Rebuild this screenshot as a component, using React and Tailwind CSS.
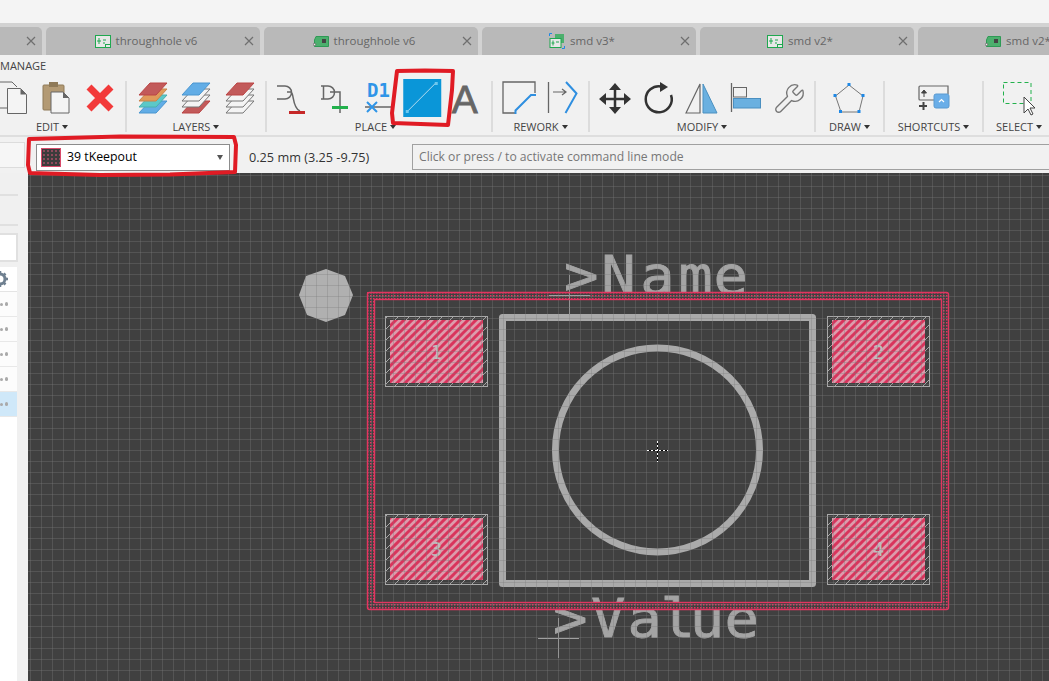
import { Wrench } from 'lucide-react'

const sans = 'font-["Open_Sans",sans-serif]'

function SchematicIcon() {
  return (
    <svg width="16" height="13" viewBox="0 0 16 13" className="shrink-0">
      <rect x="0.5" y="0.5" width="15" height="12" fill="#e8e8e8" stroke="#1fa84f" />
      <path d="M4 3v6M2 6h4M8 5h3M8 8h2" stroke="#1fa84f" fill="none" />
      <rect x="10.5" y="9.5" width="5" height="3" fill="#e8e8e8" stroke="#1fa84f" />
    </svg>
  )
}

function BoardIcon() {
  return (
    <svg width="16" height="11" viewBox="0 0 16 11" className="shrink-0">
      <path d="M3 0.5h12.5v10H1.5V4z" fill="#4caf6d" stroke="#2e9a55" />
      <rect x="9" y="3" width="4" height="4" fill="#444" />
      <circle cx="1.5" cy="8.5" r="1.2" fill="#eee" stroke="#555" strokeWidth="0.7" />
    </svg>
  )
}

function ComboIcon() {
  return (
    <svg width="16" height="16" viewBox="0 0 16 16" className="shrink-0">
      <path d="M6 1h9v9H6z" fill="#4caf6d" />
      <rect x="1" y="5.5" width="11" height="9" fill="#e8e8e8" stroke="#1fa84f" />
      <path d="M4 7.5v5M2.5 10h3M7 9h3" stroke="#1fa84f" fill="none" />
      <path d="M0.5 3V0.5H3M13 15.5h2.5V13" stroke="#1e88e5" fill="none" />
    </svg>
  )
}

function Tab({ icon, label }) {
  return (
    <div className="w-[214px] shrink-0 h-[28px] bg-[#b9b9b9] rounded-t-[5px] flex items-center">
      <div className="flex-1 flex items-center justify-center gap-[5px] whitespace-nowrap pl-[2px]">
        {icon}
        {label && <span className={`text-[11.5px] text-[#666] ${sans}`}>{label}</span>}
      </div>
      <svg width="10" height="10" viewBox="0 0 10 10" className="mr-[6px] shrink-0">
        <path d="M1 1l8 8M9 1l-8 8" stroke="#6f6f6f" strokeWidth="1.2" />
      </svg>
    </div>
  )
}

function Box({ children }) {
  return (
    <svg width="43.5" height="38" viewBox="0 0 43.5 38" className="shrink-0 overflow-visible">
      {children}
    </svg>
  )
}

function Group({ width, label, caret = true, labelClass = '', children }) {
  return (
    <div className={`${width} shrink-0 h-[51px] mt-[2px] flex flex-col items-center border-r-2 border-[#dcdcdc]`}>
      <div className="flex h-[38px] -mt-[2px] items-center">{children}</div>
      <div className={`mt-[3px] flex items-center gap-[3px] text-[11px] leading-[13px] text-[#444] whitespace-nowrap ${sans} ${labelClass}`}>
        {label}
        {caret && <span className="w-0 h-0 border-x-[3.5px] border-x-transparent border-t-[4px] border-t-[#333]" />}
      </div>
    </div>
  )
}

function Doc({ x, y, w = 18, h = 21, fill = '#f4f4f4' }) {
  return (
    <g>
      <path d={`M${x} ${y}h${w - 6}l6 6v${h - 6}h${-w}z`} fill={fill} stroke="#666" />
      <path d={`M${x + w - 6} ${y}l6 6h-6z`} fill="#666" />
    </g>
  )
}

function Layers({ items }) {
  return (
    <Box>
      {[...items].reverse().map((c, i) => {
        const y = 4 + (items.length - 1 - i) * 6
        return <path key={i} d={`M19 ${y}h17l-11 12H8z`} fill={c.fill} stroke={c.stroke} strokeWidth="1" />
      })}
    </Box>
  )
}

const white = { fill: '#f4f4f4', stroke: '#777' }
const redLayer = { fill: '#c25a5a', stroke: '#b44' }
const blueLayer = { fill: '#62ade6', stroke: '#4a96d0' }

function Toolbar() {
  return (
    <div className="h-[82px] bg-[#f1f1f1] border-b-2 border-[#dedede] shrink-0">
      <div className={`h-[24px] pt-[4px] text-[11px] leading-[14px] text-[#444] ${sans}`}>MANAGE</div>
      <div className="flex -ml-[13px]">
        <Group width="w-[140px]" label="EDIT" labelClass="pr-[8px]">
          <Box>
            <path d="M0 3H21l5 5" fill="none" stroke="#666" />
            <path d="M0 29H16" fill="none" stroke="#666" />
            <Doc x={16.5} y={9.5} w={19} h={25} />
          </Box>
          <Box>
            <rect x="9" y="6" width="21" height="25" rx="1" fill="#b39a74" stroke="#8f7a58" />
            <rect x="15" y="3" width="9" height="5" fill="#8f7a58" />
            <Doc x={17} y={13} />
          </Box>
          <Box>
            <path d="M11 8l22 22M33 8L11 30" stroke="#f23a3a" strokeWidth="7" />
          </Box>
        </Group>
        <Group width="w-[140px]" label="LAYERS">
          <Layers items={[redLayer, { fill: '#e09a5a', stroke: '#c8844a' }, { fill: '#5cc8c8', stroke: '#48b0b0' }, blueLayer]} />
          <Layers items={[blueLayer, white, white, redLayer]} />
          <Layers items={[redLayer, white, white, white]} />
        </Group>
        <Group width="w-[226px]" label="PLACE" labelClass="pr-[7px] text-[11.5px]">
          <Box>
            <path d="M7 7h8a6.500 6.500 0 0 1 0 13H7M17 13h4c3 0 1 16 9 19" fill="none" stroke="#666" strokeWidth="1.5" />
            <rect x="19" y="32" width="16" height="3" fill="#c62828" />
          </Box>
          <Box>
            <path d="M7 7h7a6.500 6.500 0 0 1 0 13H7M9.500 7v13M16 13h10v21" fill="none" stroke="#666" strokeWidth="1.5" />
            <rect x="18" y="27" width="16" height="3" fill="#22b14c" />
          </Box>
          <Box>
            <text x="10" y="18" fontSize="19" fontWeight="700" fill="#2f95e8" fontFamily="DejaVu Sans Mono, monospace">D1</text>
            <path d="M8 28h28" stroke="#666" strokeWidth="1.5" />
            <path d="M10 23l10 10M20 23L10 33" stroke="#2f95e8" strokeWidth="2" />
          </Box>
          <Box>
            <rect x="2.250" y="0" width="38" height="38" fill="#0a96d8" />
            <path d="M6.750 32L34.750 4" stroke="#b5dcef" strokeWidth="1" />
            <rect x="4.750" y="31" width="3" height="3" fill="#6cc8ee" />
            <rect x="33.750" y="3" width="3" height="3" fill="#6cc8ee" />
          </Box>
          <Box>
            <text x="20.750" y="34" textAnchor="middle" fontSize="39" fill="#666" stroke="#666" strokeWidth="0.8" fontFamily="Liberation Sans, sans-serif">A</text>
          </Box>
        </Group>
        <Group width="w-[97px]" label="REWORK">
          <Box>
            <path d="M18.500 34H6V3h32v11" fill="none" stroke="#666" strokeWidth="1.3" />
            <path d="M18.500 35v-3.500L34 16h5" fill="none" stroke="#2f8fe0" strokeWidth="2" />
          </Box>
          <Box>
            <path d="M7.500 3v31" stroke="#666" strokeWidth="1.3" />
            <path d="M12 13h12M21 10l4 3-4 3" fill="none" stroke="#666" strokeWidth="1.2" />
            <path d="M25 3l10.500 11.500L24.500 34" fill="none" stroke="#2f8fe0" strokeWidth="2" />
          </Box>
        </Group>
        <Group width="w-[226px]" label="MODIFY">
          <Box>
            <path d="M22 8v24M10 20h24" stroke="#333" strokeWidth="2.500" />
            <path d="M22 4l6 7H16zM22 35l6-7H16zM6 20l7-6v12zM38 20l-7-6v12z" fill="#333" />
          </Box>
          <Box>
            <path d="M24 7.500A13 13 0 1 0 34 16" fill="none" stroke="#333" strokeWidth="2.500" />
            <path d="M23 3l8 5-8 5z" fill="#333" />
          </Box>
          <Box>
            <path d="M6 34L20 5v29z" fill="none" stroke="#666" strokeWidth="1.200" />
            <path d="M23 5l14 29H23z" fill="#6ab0e0" stroke="#4a90c0" />
          </Box>
          <Box>
            <path d="M7.500 4v29" stroke="#666" strokeWidth="1.300" />
            <rect x="9.500" y="8.500" width="13" height="9.500" fill="none" stroke="#666" />
            <rect x="9.500" y="19.500" width="27" height="9.500" fill="#6ab0e0" stroke="#4a8fc0" />
          </Box>
          <div className="w-[43.5px] flex justify-center text-[#777]">
            <Wrench size={33} strokeWidth={1} />
          </div>
        </Group>
        <Group width="w-[69px]" label="DRAW">
          <Box>
            <path d="M21 6l14 11-4 16H13L7.500 17z" fill="none" stroke="#777" strokeWidth="1" />
            <g fill="#1e88e5">
              <rect x="19.500" y="4" width="3" height="3" />
              <rect x="33.500" y="15" width="3" height="3" />
              <rect x="29.500" y="31" width="3" height="3" />
              <rect x="11" y="31" width="3" height="3" />
              <rect x="5.500" y="15" width="3" height="3" />
            </g>
          </Box>
        </Group>
        <Group width="w-[99px]" label="SHORTCUTS">
          <Box>
            <path d="M36 15V7H8q-1 0-1 1v12q0 1 1 1h18" fill="none" stroke="#666" strokeWidth="1.200" />
            <path d="M12 18v-5M9.500 14l2.500-3 2.500 3z" fill="#444" stroke="#444" />
            <path d="M7 27h8M11.500 23v8" stroke="#444" strokeWidth="2" />
            <rect x="22" y="15" width="15" height="14" rx="2" fill="#6aaee8" stroke="#5a9ad0" />
            <path d="M27 23l2.500-2.500L32 23" fill="none" stroke="#fff" strokeWidth="1.200" />
          </Box>
        </Group>
        <div className="w-[70px] shrink-0 h-[51px] mt-[2px] flex flex-col items-center">
          <div className="flex h-[38px] -mt-[2px] items-center">
            <Box>
              <rect x="6.500" y="3.500" width="27.500" height="21" fill="none" stroke="#22b14c" strokeDasharray="4 3" />
              <path d="M27 18v16l4-4 3 6 2-1-3-6h5z" fill="#fff" stroke="#444" />
            </Box>
          </div>
          <div className={`mt-[3px] flex items-center gap-[3px] text-[11px] leading-[13px] text-[#444] whitespace-nowrap ${sans}`}>
            SELECT
            <span className="w-0 h-0 border-x-[3.5px] border-x-transparent border-t-[4px] border-t-[#333]" />
          </div>
        </div>
      </div>
    </div>
  )
}

function CommandRow() {
  return (
    <div className={`h-[36px] shrink-0 bg-[#f1f1f1] flex items-center pt-[5px] text-[12px] ${sans}`}>
      <div className="w-[25px] h-[26px] -mt-[6px] bg-[#f6f6f6] border border-l-0 border-[#dcdcdc] shrink-0" />
      <div className="ml-[11px] w-[194px] h-[27px] shrink-0 -mt-[1px] bg-white border border-[#8c8c8c] flex items-center pl-[4px]">
        <div className="w-[20px] h-[19px] border border-[#d84a6a] bg-[#3c3c3c] bg-[radial-gradient(#8f4a5c_1px,transparent_1px)] bg-[length:4px_4px]" />
        <span className="ml-[6px] text-black flex-1 text-[12.3px]">39 tKeepout</span>
        <span className="mr-[6px] w-0 h-0 border-x-[3.5px] border-x-transparent border-t-[5px] border-t-[#555]" />
      </div>
      <span className="ml-[19px] w-[163px] shrink-0 text-[#333] text-[12.7px]">0.25 mm (3.25 -9.75)</span>
      <div className="flex-1 h-[26px] -mt-[1px] border border-r-0 border-[#a0a0a0] flex items-center pl-[6px] text-[#777] text-[12.15px]">
        Click or press / to activate command line mode
      </div>
    </div>
  )
}

function Sidebar() {
  return (
    <div className="w-[28px] shrink-0 bg-[#f0f0f0] flex flex-col">
      <div className="h-[23px] w-[18px] border-b-2 border-[#e0e0e0]" />
      <div className="h-[30px] w-[18px] border-b-2 border-[#e0e0e0]" />
      <div className="mt-[7px] h-[29px] w-[18px] bg-white border-2 border-l-0 border-[#e0e0e0]" />
      <div className="mt-[5px] w-[17px] flex-1 bg-white flex flex-col">
        <div className="h-[25px] flex items-center overflow-hidden border-b border-[#e4e4e4]">
          <svg width="20" height="20" viewBox="0 0 20 20" className="-ml-[8px] shrink-0">
            <circle cx="8" cy="10" r="5" fill="none" stroke="#6f8090" strokeWidth="3" />
            <path d="M8 2v3M8 15v3M0 10h3M13 10h3M2.500 4.500l2 2M13.500 4.500l-2 2M2.500 15.500l2-2M13.500 15.500l-2-2" stroke="#6f8090" strokeWidth="2.500" />
          </svg>
        </div>
        {[0, 1, 2, 3, 4].map((i) => (
          <div key={i} className={`h-[25px] flex items-center justify-end gap-[2px] pr-[9px] border-b border-[#e8e8e8] ${i === 4 ? 'bg-[#cfe8f9]' : 'bg-[#fcfcfc]'}`}>
            <span className="w-[3px] h-[3px] rounded-full bg-[#aaa]" />
            <span className="w-[4px] h-[4px] rounded-full bg-[#aaa]" />
          </div>
        ))}
      </div>
    </div>
  )
}

function Pad({ x, y, w, h, fx, fy, fw, fh, n }) {
  return (
    <g>
      <rect x={x + 0.5} y={y + 0.5} width={w} height={h} fill="url(#ring)" stroke="#a8a8a8" />
      <rect x={fx} y={fy} width={fw} height={fh} fill="url(#padHatch)" />
      <text x={fx + fw / 2} y={fy + fh / 2 + 7} textAnchor="middle" fontSize="19" fill="#bdbdbd" fontFamily="DejaVu Sans Mono, monospace">{n}</text>
    </g>
  )
}

function Canvas() {
  const xs = Array.from({ length: 94 }, (_, i) => 30 + i * 11)
  const ys = Array.from({ length: 47 }, (_, i) => 175 + i * 11)
  return (
    <div className="flex-1 bg-[#404040] overflow-hidden">
      <svg width="1021" height="508" viewBox="28 173 1021 508" className="block">
        <defs>
          <pattern id="padHatch" width="8" height="8" patternUnits="userSpaceOnUse">
            <rect width="8" height="8" fill="#dc9cac" />
            <path d="M-2 6L6 -2M2 10L10 2" stroke="#d9345c" strokeWidth="3" />
          </pattern>
          <pattern id="ring" width="11" height="11" patternUnits="userSpaceOnUse">
            <rect width="11" height="11" fill="#404040" />
            <path d="M0 11L11 0" stroke="#a8a8a8" strokeWidth="1" />
          </pattern>
          <pattern id="keepout" width="3" height="3" patternUnits="userSpaceOnUse">
            <rect width="3" height="3" fill="#404040" />
            <rect x="1" y="1" width="1.500" height="1.500" fill="#e23560" />
          </pattern>
        </defs>

        <polygon points="326,269 345,276 353,295 345,315 326,322 307,315 299,295 306,276" fill="#b0b0b0" />

        <g fontFamily="DejaVu Sans Mono, monospace" fontSize="53" fill="#a4a4a4" stroke="#a4a4a4" strokeWidth="0.8">
          <text transform="translate(564 294) scale(1.08 1)" x="0 34.5 70.7 105.8 138.4">&gt;Name</text>
          <text transform="translate(553 637) scale(1.08 1)" x="0 35.2 68.9 99.5 126.6 158.8">&gt;Value</text>
        </g>

        <path fillRule="evenodd" d="M367 292h582v318H367zM374 299v304h568V299z" fill="url(#keepout)" />

        <Pad x={385} y={316} w={102} h={70} fx={390} fy={320} fw={93} fh={63} n="1" />
        <Pad x={827} y={316} w={102} h={70} fx={832} fy={320} fw={93} fh={63} n="2" />
        <Pad x={385} y={514} w={102} h={70} fx={390} fy={518} fw={93} fh={62} n="3" />
        <Pad x={827} y={514} w={102} h={70} fx={832} fy={518} fw={93} fh={62} n="4" />

        <rect x="502.500" y="317.500" width="310" height="266" fill="none" stroke="#aaaaaa" strokeWidth="7" strokeLinejoin="round" />
        <circle cx="657.500" cy="450" r="102" fill="none" stroke="#aaaaaa" strokeWidth="7" />

        <path d="M549 295.500h41M569.500 275v40M538 638.500h41M558.500 618v40" stroke="#a0a0a0" strokeWidth="1" />

        <g stroke="#7c7c7c" strokeOpacity="0.33">
          {xs.map((x) => <path key={x} d={`M${x + 0.5} 173V681`} />)}
          {ys.map((y) => <path key={y} d={`M28 ${y + 0.5}H1049`} />)}
        </g>

        <rect x="367.500" y="292.500" width="581" height="317" rx="2" fill="none" stroke="#e23560" strokeWidth="1.400" />
        <rect x="374.500" y="299.500" width="567" height="303" fill="none" stroke="#e23560" strokeWidth="1.400" />

        <path d="M647 450.500h21M657.500 441v21" stroke="#000" />
        <path d="M647 450.500h21M657.500 441v21" stroke="#fff" strokeDasharray="2 2" />
      </svg>
    </div>
  )
}

export default function App() {
  return (
    <div className="relative w-[1049px] h-[681px] overflow-hidden flex flex-col bg-[#f1f1f1]">
      <div className="h-[23px] shrink-0 bg-[#f4f4f4]" />
      <div className="h-[32px] shrink-0 bg-[#d2d2d2] pt-[4px] flex gap-[4px] -ml-[172px]">
        <Tab />
        <Tab icon={<SchematicIcon />} label="throughhole v6" />
        <Tab icon={<BoardIcon />} label="throughhole v6" />
        <Tab icon={<ComboIcon />} label="smd v3*" />
        <Tab icon={<SchematicIcon />} label="smd v2*" />
        <Tab icon={<BoardIcon />} label="smd v2*" />
      </div>
      <Toolbar />
      <CommandRow />
      <div className="flex-1 flex min-h-0">
        <Sidebar />
        <Canvas />
      </div>
      <svg width="1049" height="681" className="absolute inset-0 pointer-events-none" fill="none" stroke="#e01b24" strokeWidth="4" strokeLinejoin="round" strokeLinecap="round">
        <path d="M397 71L425 70.500L453 71L452 90L448 125L393 123L392 113L397 71Z" />
        <path d="M29 139L120 136.500L234 137L236 145L235 172L170 174.500L100 175L30 173L28 165Z" />
      </svg>
    </div>
  )
}
